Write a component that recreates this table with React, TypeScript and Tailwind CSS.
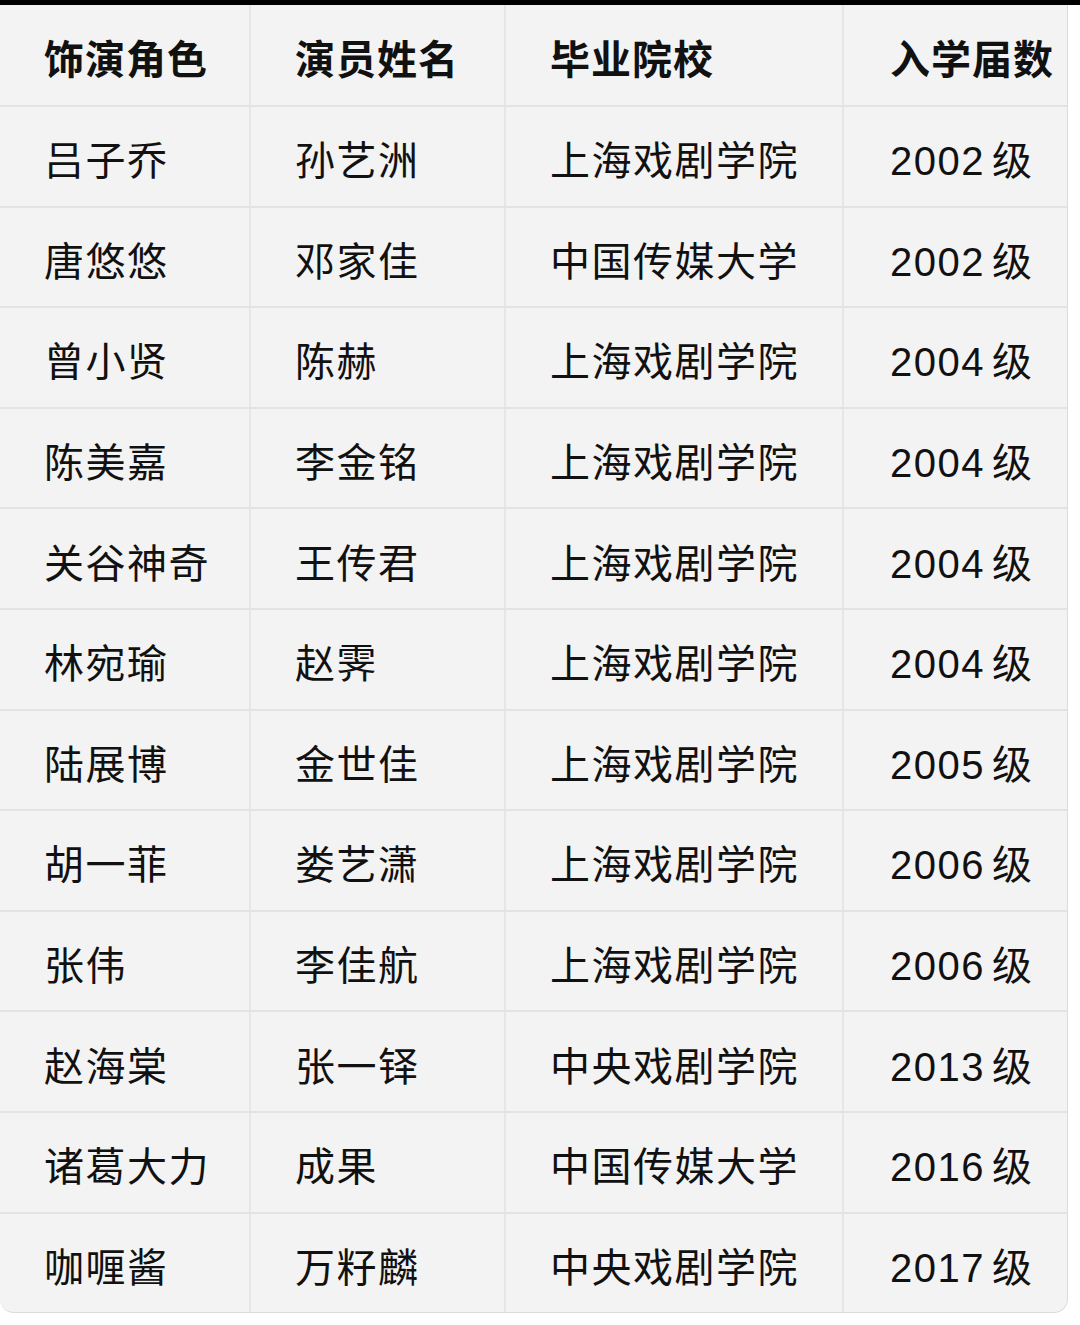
const header = ["饰演角色", "演员姓名", "毕业院校", "入学届数"];

const rows = [
  ["吕子乔", "孙艺洲", "上海戏剧学院", "2002"],
  ["唐悠悠", "邓家佳", "中国传媒大学", "2002"],
  ["曾小贤", "陈赫", "上海戏剧学院", "2004"],
  ["陈美嘉", "李金铭", "上海戏剧学院", "2004"],
  ["关谷神奇", "王传君", "上海戏剧学院", "2004"],
  ["林宛瑜", "赵霁", "上海戏剧学院", "2004"],
  ["陆展博", "金世佳", "上海戏剧学院", "2005"],
  ["胡一菲", "娄艺潇", "上海戏剧学院", "2006"],
  ["张伟", "李佳航", "上海戏剧学院", "2006"],
  ["赵海棠", "张一铎", "中央戏剧学院", "2013"],
  ["诸葛大力", "成果", "中国传媒大学", "2016"],
  ["咖喱酱", "万籽麟", "中央戏剧学院", "2017"],
];

const cols = "grid grid-cols-[251px_255px_338px_224px]";

export default function App() {
  return (
    <div
      className="w-[1080px] h-[1325px] bg-white text-[#111]"
      style={{ fontFamily: '"Liberation Sans", "Noto Sans CJK SC", sans-serif' }}
    >
      <div className="h-[5px] bg-black" />
      <div className="w-[1068px] bg-[#f3f3f3] border-r border-b border-[#dcdcdc] rounded-b-[14px] overflow-hidden">
        {/* header */}
        <div className={`${cols} h-[100px]`}>
          {header.map((h, i) => (
            <div
              key={i}
              className={`flex items-center pt-[10px] text-[40px] font-bold tracking-[1px] ${i < 3 ? "border-r-2 border-[#e6e6e6] pl-[44px]" : "pl-[46px]"}`}
            >
              {h}
            </div>
          ))}
        </div>
        {rows.map((r, ri) => (
          <div key={ri} className={`${cols} h-[100.6px] border-t-2 border-[#e3e3e3]`}>
            {r.map((c, ci) => (
              <div
                key={ci}
                className={`flex items-center pt-[10px] text-[40px] tracking-[1.5px] ${ci < 3 ? "border-r-2 border-[#e6e6e6] pl-[44px]" : "pl-[46px]"}`}
              >
                {c}
                {ci === 3 && <span className="ml-[7px]">级</span>}
              </div>
            ))}
          </div>
        ))}
      </div>
    </div>
  );
}
